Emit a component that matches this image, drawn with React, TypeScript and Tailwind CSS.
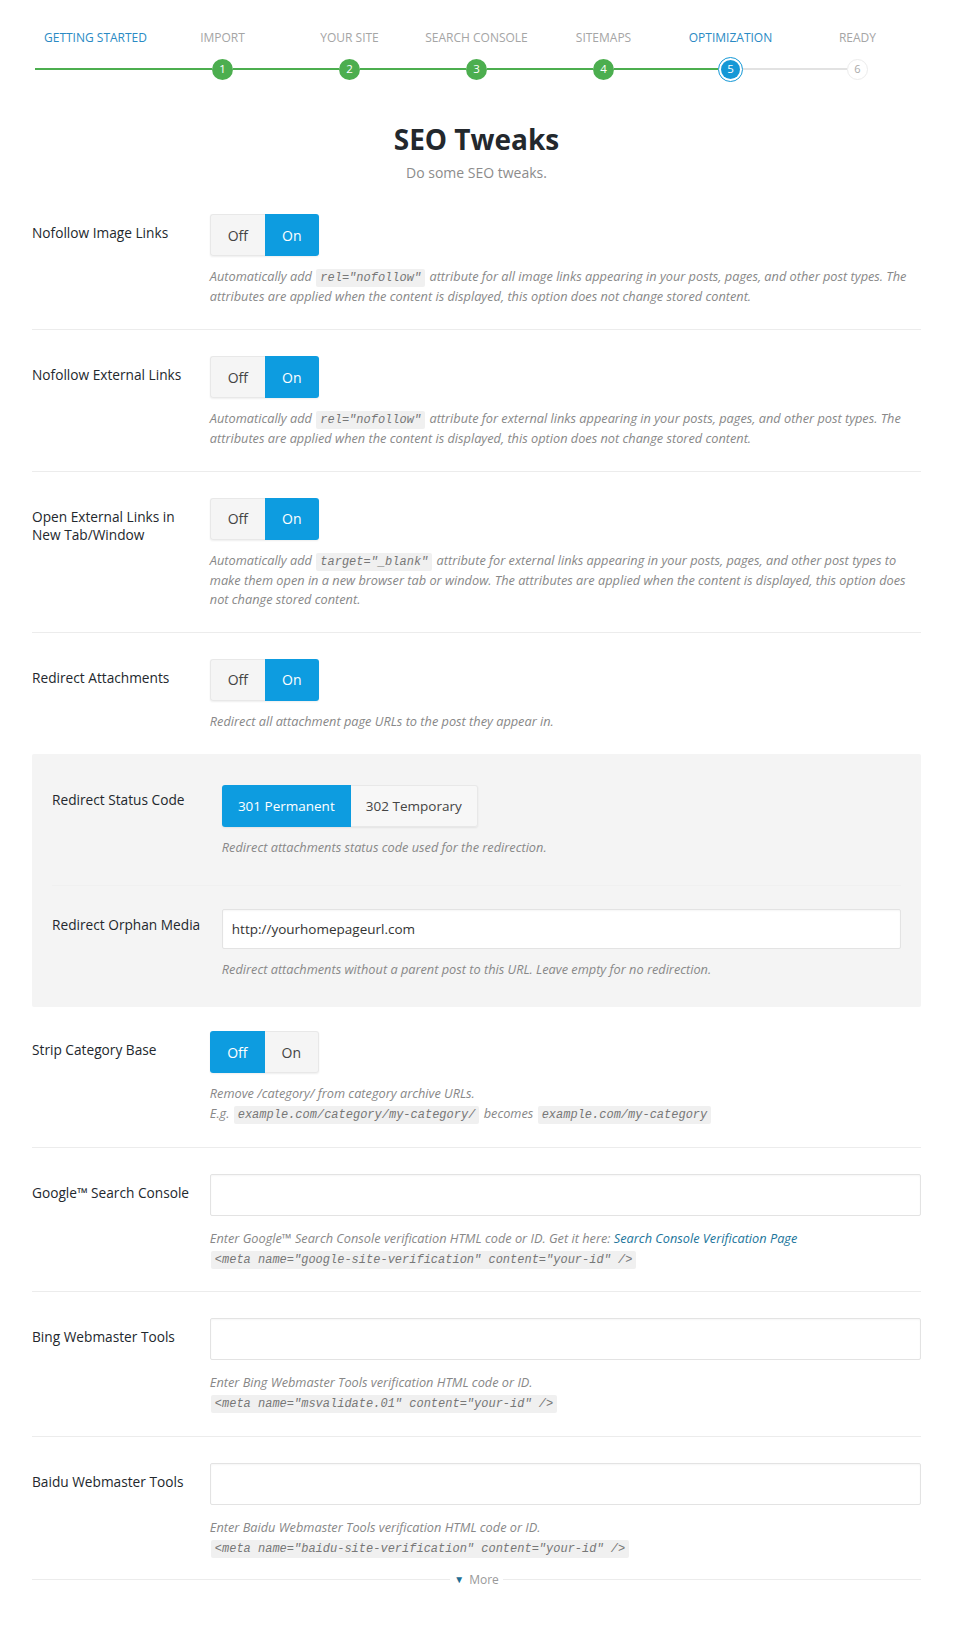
import type { ReactNode } from 'react';

const STEPS = [
  { label: 'Getting Started' },
  { label: 'Import', n: 1 },
  { label: 'Your Site', n: 2 },
  { label: 'Search Console', n: 3 },
  { label: 'Sitemaps', n: 4 },
  { label: 'Optimization', n: 5 },
  { label: 'Ready', n: 6 },
];

const CURRENT = 5;

function Code({ children }: { children: ReactNode }) {
  return (
    <code className="mx-[1px] rounded-[2px] bg-[#f0f0f0] px-[4px] py-[2px] font-['Liberation_Mono',monospace] text-[12px] leading-none italic text-[#777]">
      {children}
    </code>
  );
}

function Desc({ children, mt = 'mt-[11px]' }: { children: ReactNode; mt?: string }) {
  return <p className={`${mt} text-[12.75px] leading-[19.7px] italic text-[#888]`}>{children}</p>;
}

function Toggle({ on }: { on: boolean }) {
  const active = 'bg-[#0d9ce0] text-white';
  const idle = 'bg-[#f5f5f5] text-[#444] border border-[#e8e8e8]';
  return (
    <div className="inline-flex h-[42px] rounded-[3px] shadow-[0_1px_2px_rgba(0,0,0,0.07)]">
      <span
        className={`flex w-[55px] items-center justify-center rounded-l-[3px] text-[14px] ${on ? idle + ' border-r-0' : active}`}
      >
        Off
      </span>
      <span
        className={`flex w-[54px] items-center justify-center rounded-r-[3px] text-[14px] ${on ? active : idle + ' border-l-0'}`}
      >
        On
      </span>
    </div>
  );
}

function TextInput({ value = '', h = 'h-[42px]' }: { value?: string; h?: string }) {
  return (
    <div
      className={`flex ${h} w-full items-center rounded-[2px] border border-[#e3e3e3] bg-white px-[9px] text-[13.5px] text-[#333] shadow-[inset_0_1px_2px_rgba(0,0,0,0.04)]`}
    >
      {value}
    </div>
  );
}

function Row({
  label,
  children,
  border = true,
  pt = 'pt-[26px]',
  pb = 'pb-[23px]',
}: {
  label: ReactNode;
  children: ReactNode;
  border?: boolean;
  pt?: string;
  pb?: string;
}) {
  return (
    <div className={`flex ${pt} ${pb} ${border ? 'border-b border-[#ececec]' : ''}`}>
      <div className="w-1/5 shrink-0 pt-[10px] pr-4 text-[13.7px] leading-[18px] text-[#23282d]">{label}</div>
      <div className="min-w-0 flex-1">{children}</div>
    </div>
  );
}

export default function App() {
  return (
    <div className="min-h-[1627px] bg-white font-['Open_Sans','Noto_Sans',sans-serif]">
      <div className="ml-[32px] w-[889px] pt-[30px]">
        {/* wizard steps */}
        <div className="grid grid-cols-7">
          {STEPS.map((s, i) => {
            const done = s.n !== undefined && s.n < CURRENT;
            const current = s.n === CURRENT;
            const labelColor = i === 0 || current ? 'text-[#2a8ac4]' : 'text-[#a5a5a5]';
            const leftLine = s.n === undefined ? '' : s.n <= CURRENT ? 'bg-[#4cae4f]' : 'bg-[#e2e2e2]';
            const rightLine =
              s.n === 6 ? 'bg-transparent' : s.n === CURRENT ? 'bg-[#e2e2e2]' : 'bg-[#4cae4f]';
            return (
              <div key={s.label} className="flex flex-col items-center">
                <div className={`h-[16px] text-[12px] leading-[16px] uppercase ${labelColor}`}>{s.label}</div>
                <div className="mt-[11px] flex h-[24px] w-full items-center">
                  {s.n === undefined ? (
                    <div className="ml-[3px] h-[1.5px] flex-1 bg-[#4cae4f]" />
                  ) : (
                    <>
                      <div className={`h-[1.5px] flex-1 ${leftLine}`} />
                      {done && (
                        <span className="flex h-[21px] w-[21px] items-center justify-center rounded-full bg-[#4cae4f] text-[11.5px] text-white">
                          {s.n}
                        </span>
                      )}
                      {current && (
                        <span className="flex h-[25px] w-[25px] items-center justify-center rounded-full border-[1.5px] border-[#1598d6] bg-white">
                          <span className="flex h-[19px] w-[19px] items-center justify-center rounded-full bg-[#1598d6] text-[11.5px] text-white">
                            {s.n}
                          </span>
                        </span>
                      )}
                      {!done && !current && (
                        <span className="flex h-[21px] w-[21px] items-center justify-center rounded-full border border-[#ececec] bg-white text-[11px] text-[#aaa]">
                          {s.n}
                        </span>
                      )}
                      <div className={`h-[1.5px] flex-1 ${rightLine}`} />
                    </>
                  )}
                </div>
              </div>
            );
          })}
        </div>

        <h1 className="mt-[40px] text-center text-[28px] leading-[36px] font-bold text-[#23282d]">SEO Tweaks</h1>
        <p className="mt-[6px] text-center text-[14px] leading-[20px] text-[#8c8c8c]">Do some SEO tweaks.</p>

        <div className="mt-[5px]">
          <Row label="Nofollow Image Links">
            <Toggle on />
            <Desc>
              Automatically add <Code>rel="nofollow"</Code> attribute for all image links appearing in your posts,
              pages, and other post types. The attributes are applied when the content is displayed, this option does
              not change stored content.
            </Desc>
          </Row>
          <Row label="Nofollow External Links" pb="pb-[22px]">
            <Toggle on />
            <Desc>
              Automatically add <Code>rel="nofollow"</Code> attribute for external links appearing in your posts,
              pages, and other post types. The attributes are applied when the content is displayed, this option does
              not change stored content.
            </Desc>
          </Row>
          <Row label="Open External Links in New Tab/Window" pb="pb-[22px]">
            <Toggle on />
            <Desc>
              Automatically add <Code>target="_blank"</Code> attribute for external links appearing in your posts,
              pages, and other post types to make them open in a new browser tab or window. The attributes are applied
              when the content is displayed, this option does not change stored content.
            </Desc>
          </Row>
          <Row label="Redirect Attachments" border={false} pb="pb-[22px]">
            <Toggle on />
            <Desc>Redirect all attachment page URLs to the post they appear in.</Desc>
          </Row>

          {/* dependent settings */}
          <div className="rounded-[2px] bg-[#f4f4f4] px-[20px]">
            <div className="flex pt-[31px] pb-[28px] border-b border-[#f0f0f0]">
              <div className="w-1/5 shrink-0 pt-[6px] text-[13.7px] leading-[18px] text-[#23282d]">Redirect Status Code</div>
              <div className="flex-1">
                <div className="inline-flex h-[42px] rounded-[3px] shadow-[0_1px_2px_rgba(0,0,0,0.07)]">
                  <span className="flex w-[129px] items-center justify-center rounded-l-[3px] bg-[#0d9ce0] text-[13.5px] text-white">
                    301 Permanent
                  </span>
                  <span className="flex w-[127px] items-center justify-center rounded-r-[3px] border border-l-0 border-[#e8e8e8] bg-[#f7f7f7] text-[13.5px] text-[#444]">
                    302 Temporary
                  </span>
                </div>
                <Desc>Redirect attachments status code used for the redirection.</Desc>
              </div>
            </div>
            <div className="flex pt-[23px] pb-[27px]">
              <div className="w-1/5 shrink-0 pt-[7px] text-[13.7px] leading-[18px] text-[#23282d]">Redirect Orphan Media</div>
              <div className="flex-1">
                <TextInput value="http://yourhomepageurl.com" h="h-[40px]" />
                <Desc>Redirect attachments without a parent post to this URL. Leave empty for no redirection.</Desc>
              </div>
            </div>
          </div>

          <Row label="Strip Category Base" pt="pt-[24px]" pb="pb-[24px]">
            <Toggle on={false} />
            <Desc>
              Remove /category/ from category archive URLs.
              <br />
              E.g. <Code>example.com/category/my-category/</Code> becomes <Code>example.com/my-category</Code>
            </Desc>
          </Row>
          <Row label="Google™ Search Console" pb="pb-[22px]">
            <TextInput />
            <Desc mt="mt-[13px]">
              Enter Google™ Search Console verification HTML code or ID. Get it here:{' '}
              <a className="text-[#21759b]">Search Console Verification Page</a>
              <br />
              <Code>&lt;meta name="google-site-verification" content="your-id" /&gt;</Code>
            </Desc>
          </Row>
          <Row label="Bing Webmaster Tools" pb="pb-[24px]">
            <TextInput />
            <Desc mt="mt-[13px]">
              Enter Bing Webmaster Tools verification HTML code or ID.
              <br />
              <Code>&lt;meta name="msvalidate.01" content="your-id" /&gt;</Code>
            </Desc>
          </Row>
          <Row label="Baidu Webmaster Tools" border={false} pb="pb-[13px]">
            <TextInput />
            <Desc mt="mt-[13px]">
              Enter Baidu Webmaster Tools verification HTML code or ID.
              <br />
              <Code>&lt;meta name="baidu-site-verification" content="your-id" /&gt;</Code>
            </Desc>
          </Row>
        </div>

        {/* more divider */}
        <div className="flex items-center">
          <div className="h-px flex-1 bg-[#ececec]" />
          <span className="flex items-center gap-[5px] px-[4px] text-[12px] text-[#999]">
            <span className="text-[10px] text-[#1f6e94]">▼</span>More
          </span>
          <div className="h-px flex-1 bg-[#ececec]" />
        </div>
      </div>
    </div>
  );
}
